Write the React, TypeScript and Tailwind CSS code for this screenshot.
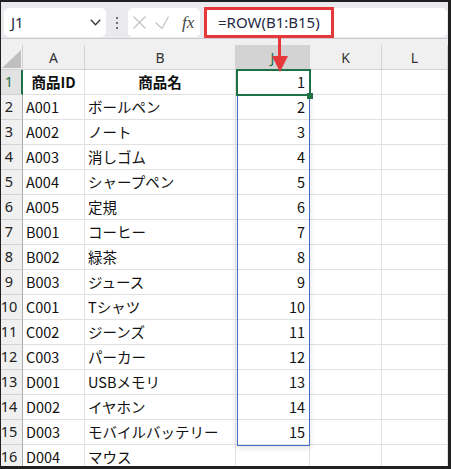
import React from 'react';

const rows: [string, string, number | null][] = [
  ['商品ID', '商品名', 1],
  ['A001', 'ボールペン', 2],
  ['A002', 'ノート', 3],
  ['A003', '消しゴム', 4],
  ['A004', 'シャープペン', 5],
  ['A005', '定規', 6],
  ['B001', 'コーヒー', 7],
  ['B002', '緑茶', 8],
  ['B003', 'ジュース', 9],
  ['C001', 'Tシャツ', 10],
  ['C002', 'ジーンズ', 11],
  ['C003', 'パーカー', 12],
  ['D001', 'USBメモリ', 13],
  ['D002', 'イヤホン', 14],
  ['D003', 'モバイルバッテリー', 15],
  ['D004', 'マウス', null],
];

function Toolbar() {
  return (
    <div className="flex h-[37px] items-start border-b border-[#cacace] bg-[#e9e9ee] pt-[6px] font-['Noto_Sans',sans-serif]">
      {/* name box */}
      <div className="ml-[3px] flex h-[29px] w-[102px] items-center justify-between rounded-[5px] bg-white pl-[7px] pr-[5px]">
        <span className="text-[15px] text-[#1f2a44]">J1</span>
        <svg width="11" height="7" viewBox="0 0 11 7">
          <polyline points="0.8,0.8 5.5,5.8 10.2,0.8" fill="none" stroke="#333" strokeWidth="1.3" />
        </svg>
      </div>
      <div className="flex h-[29px] w-[22px] flex-col items-center justify-center gap-[3px]">
        <span className="h-[2px] w-[2px] rounded-full bg-[#444]" />
        <span className="h-[2px] w-[2px] rounded-full bg-[#444]" />
        <span className="h-[2px] w-[2px] rounded-full bg-[#444]" />
      </div>
      {/* cancel / enter / fx */}
      <div className="flex h-[29px] w-[72px] items-center rounded-[5px] bg-white pl-[5px]">
        <svg width="13" height="13" viewBox="0 0 13 13">
          <path d="M0.5 0.5 L12.5 12.5 M12.5 0.5 L0.5 12.5" stroke="#c2c2c2" strokeWidth="1.2" />
        </svg>
        <svg className="ml-[9px]" width="14" height="13" viewBox="0 0 14 13">
          <polyline points="0.5,6.5 7,12.5 13.5,0.5" fill="none" stroke="#c2c2c2" strokeWidth="1.2" />
        </svg>
        <span className="ml-[13px] font-['Liberation_Serif',serif] text-[17px] italic leading-none text-[#444]">fx</span>
      </div>
      {/* formula */}
      <div className="ml-[4px] mr-[1px] flex h-[29px] flex-1 items-center rounded-[5px] bg-white pl-[14px] text-[15px] text-[#1f2a44]">
        =ROW(B1:B15)
      </div>
    </div>
  );
}

function Sheet() {
  const head = "flex h-[25px] items-center justify-center border-r border-b border-[#d2d2d2] bg-[#f0f0f0] font-['Noto_Sans',sans-serif] text-[14px] text-[#333]";
  const cell = 'flex h-[25px] items-center border-r border-b border-[#e1e1e1] bg-white text-[14.5px]';
  return (
    <div className="relative grid grid-cols-[22px_62px_151px_74px_72px_66px]">
      <div className="relative h-[25px] border-r border-b border-[#d2d2d2] bg-[#f0f0f0]">
        <svg className="absolute right-[1px] bottom-[1px]" width="19" height="18" viewBox="0 0 19 18">
          <polygon points="19,0 19,18 0,18" fill="#bfbfbf" />
        </svg>
      </div>
      <div className={head}>A</div>
      <div className={head}>B</div>
      <div className={head + ' !bg-[#d3d3d3] !text-[#1e7145]'}>J</div>
      <div className={head}>K</div>
      <div className={head}>L</div>

      {rows.map(([id, name, n], i) => (
        <React.Fragment key={i}>
          <div
            className={
              i === 0
                ? "flex h-[25px] items-center justify-center border-r-2 border-b border-r-[#1e7145] border-b-[#d4d4d4] bg-[#e2e2e2] pr-[4px] font-['Noto_Sans',sans-serif] text-[14.5px] text-[#1e7145]"
                : "flex h-[25px] items-center justify-center border-r border-b border-r-[#a9a9a9] border-b-[#d4d4d4] bg-[#f0f0f0] pr-[5px] font-['Noto_Sans',sans-serif] text-[14.5px] text-[#222]"
            }
          >
            {i + 1}
          </div>
          <div className={cell + (i === 0 ? ' justify-center font-bold' : ' pl-[3px]')}>{id}</div>
          <div className={cell + (i === 0 ? ' justify-center font-bold' : ' pl-[3px]')}>
            <span className="whitespace-nowrap">{name}</span>
          </div>
          <div className={cell + ' justify-end pr-[4px]'}>{n}</div>
          <div className={cell} />
          <div className={cell} />
        </React.Fragment>
      ))}

      {/* spill range */}
      <div className="absolute left-[236px] top-[50px] h-[351px] w-[73px] border border-[#3f6fc6] shadow-[0_2px_6px_rgba(0,0,0,0.12)]" />
      {/* active cell */}
      <div className="absolute left-[235px] top-[24px] h-[27px] w-[75px] border-2 border-[#1e7145]" />
      <div className="absolute left-[306px] top-[48px] h-[6px] w-[6px] bg-[#1e7145]" />
    </div>
  );
}

export default function App() {
  return (
    <div className="relative h-[469px] w-[451px] overflow-hidden border-t-2 border-r-[3px] border-b-[3px] border-l border-[#202020] bg-[#f0f0f0] font-['Noto_Sans_CJK_JP',sans-serif] text-[#111]">
      <Toolbar />
      <div className="h-[6px]" />
      <Sheet />
      {/* annotation */}
      <div className="absolute left-[203px] top-[5px] h-[31px] w-[130px] border-[3px] border-[#e5383b]" />
      <svg className="absolute left-[269px] top-[35px]" width="20" height="36" viewBox="0 0 20 36">
        <rect x="8" y="0" width="3" height="21" fill="#e5383b" />
        <polygon points="2,19 18,19 10,35" fill="#e5383b" />
      </svg>
    </div>
  );
}
